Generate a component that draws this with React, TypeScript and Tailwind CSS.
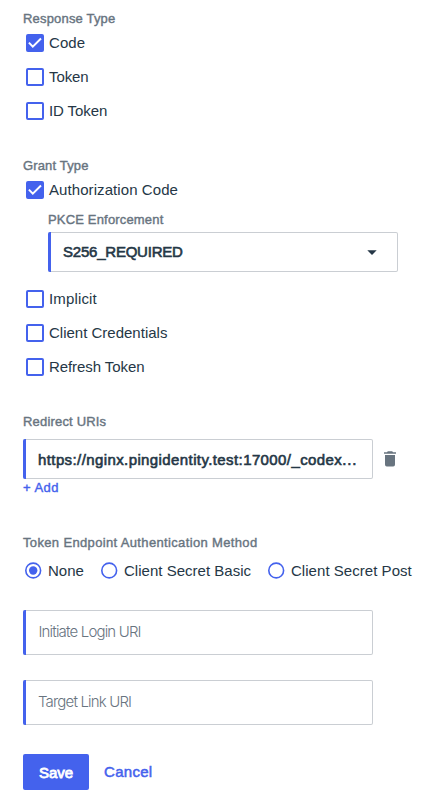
import React from 'react';

const INK = 'text-[#253746]';

function Label({ children, className = '' }: { children: React.ReactNode; className?: string }) {
  return (
    <div
      className={`h-4 whitespace-nowrap text-[13px] leading-4 text-[#68747f] [-webkit-text-stroke:0.4px_#68747f] ${className}`}
    >
      {children}
    </div>
  );
}

function Check({ label, checked = false, className = '' }: { label: string; checked?: boolean; className?: string }) {
  return (
    <label className="flex h-[18px] items-center pl-[3px]">
      <span
        className={`flex size-[18px] shrink-0 items-center justify-center rounded-[2px] border-2 border-[#4462ed] ${checked ? 'bg-[#4462ed]' : 'bg-white'}`}
      >
        {checked && (
          <svg width="14" height="14" viewBox="0 0 14 14" fill="none" stroke="#fff" strokeWidth="2">
            <path d="M0.9 6.6 L4.8 10.6 L13 2.5" />
          </svg>
        )}
      </span>
      <span className={`ml-[5px] whitespace-nowrap text-[15px] leading-[18px] ${INK} ${className}`}>{label}</span>
    </label>
  );
}

function Radio({ label, checked = false, className = '' }: { label: string; checked?: boolean; className?: string }) {
  return (
    <label className="flex items-center">
      <svg className="shrink-0" width="17" height="17" viewBox="0 0 17 17">
        <circle cx="8.2" cy="8.5" r="7.4" fill="#fff" stroke="#4462ed" strokeWidth="1.6" />
        {checked && <circle cx="8.2" cy="8.5" r="4.2" fill="#4462ed" />}
      </svg>
      <span className={`ml-[6px] whitespace-nowrap pt-[2px] text-[15px] leading-[18px] ${INK} ${className}`}>
        {label}
      </span>
    </label>
  );
}

function Field({ children, className = '' }: { children: React.ReactNode; className?: string }) {
  return (
    <div
      className={`flex w-[350px] items-center rounded-[2px] border border-l-0 border-[#caced3] bg-white ${className}`}
    >
      <span className="-my-px w-[3px] shrink-0 self-stretch rounded-l-[2px] bg-[#4462ed]" />
      {children}
    </div>
  );
}

export default function App() {
  return (
    <main className="h-[812px] w-[440px] overflow-hidden bg-white pl-[23px] pt-[11px] font-['Liberation_Sans',Arial,sans-serif]">
      <section>
        <Label className="tracking-[0.18px]">Response Type</Label>
        <div className="mt-[7px] flex flex-col gap-4">
          <Check label="Code" checked className="tracking-[0.1px]" />
          <Check label="Token" className="tracking-[-0.08px]" />
          <Check label="ID Token" className="tracking-[-0.1px]" />
        </div>
      </section>

      <section className="mt-[38px]">
        <Label className="tracking-[0.15px]">Grant Type</Label>
        <div className="mt-[7px]">
          <Check label="Authorization Code" checked className="tracking-[0.08px]" />
        </div>
        <div className="ml-[25px] mt-[13px]">
          <Label className="tracking-[0.17px]">PKCE Enforcement</Label>
          <Field className="mt-1 h-10">
            <span
              className={`ml-3 flex-1 text-[15px] tracking-[-0.22px] [-webkit-text-stroke:0.6px_#253746] ${INK}`}
            >
              S256_REQUIRED
            </span>
            <svg className="mr-[20px]" width="10" height="5" viewBox="0 0 10 5" fill="#253746">
              <path d="M0.3 0.2H9.7L5 4.9Z" />
            </svg>
          </Field>
        </div>
        <div className="mt-[18px] flex flex-col gap-4">
          <Check label="Implicit" className="tracking-[0.15px]" />
          <Check label="Client Credentials" />
          <Check label="Refresh Token" className="tracking-[-0.08px]" />
        </div>
      </section>

      <section className="mt-[38px]">
        <Label className="tracking-[0.18px]">Redirect URIs</Label>
        <div className="mt-[9px] flex items-center">
          <Field className="h-10">
            <span
              className={`ml-3 whitespace-nowrap pt-[2px] text-[15px] tracking-[0.4px] [-webkit-text-stroke:0.6px_#253746] ${INK}`}
            >
              https://nginx.pingidentity.test:17000/_codex<span className="tracking-[0.9px]">...</span>
            </span>
          </Field>
          <svg className="ml-[11px]" width="12" height="16" viewBox="0 0 12 16" fill="#68747f">
            <path d="M0 1.2H3L3.8 0.3H8.2L9 1.2H12V2.7H0ZM1 4H11V13.6Q11 15.5 9.2 15.5H2.8Q1 15.5 1 13.6Z" />
          </svg>
        </div>
        <button className="block h-[18px] text-[13px] leading-[18px] tracking-[0.45px] text-[#4462ed] [-webkit-text-stroke:0.4px_#4462ed]">
          + Add
        </button>
      </section>

      <section className="mt-[38px]">
        <Label className="tracking-[0.35px]">Token Endpoint Authentication Method</Label>
        <div className="mt-[10px] flex h-[18px] items-center pl-[2px]">
          <Radio label="None" checked className="w-[53px]" />
          <Radio label="Client Secret Basic" className="w-[144px] tracking-[0.02px]" />
          <Radio label="Client Secret Post" className="tracking-[0.04px]" />
        </div>
      </section>

      <Field className="mt-[31px] h-[45px]">
        <span className="ml-[12.5px] font-['Inter'] text-[15px] font-light tracking-[-0.83px] text-[#68747f]">
          Initiate Login URI
        </span>
      </Field>
      <Field className="mt-[25px] h-[45px]">
        <span className="ml-[12px] font-['Inter'] text-[15px] font-light tracking-[-0.83px] text-[#68747f]">
          Target Link URI
        </span>
      </Field>

      <div className="mt-[29px] flex items-center">
        <button className="h-9 w-[66px] rounded-[2px] bg-[#4462ed] pt-[2px] text-[15px] text-white [-webkit-text-stroke:0.8px_#fff]">
          Save
        </button>
        <button className="ml-[15px] text-[15px] tracking-[0.3px] text-[#4462ed] [-webkit-text-stroke:0.5px_#4462ed]">
          Cancel
        </button>
      </div>
    </main>
  );
}
